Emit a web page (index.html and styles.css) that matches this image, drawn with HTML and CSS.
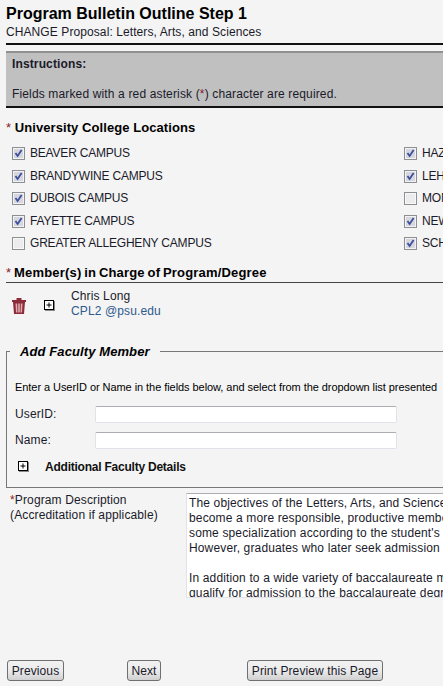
FILE: index.html
```html
<!DOCTYPE html>
<html lang="en">
<head>
<meta charset="utf-8"/>
<title>Program Bulletin Outline Step 1</title>
<link rel="stylesheet" href="styles.css">
</head>
<body>
<svg class="defs" width="0" height="0" aria-hidden="true">
  <symbol id="checked" viewBox="0 0 13 13">
    <rect x="0.5" y="0.5" width="12" height="12" fill="#e6e6ee" stroke="#8e8f8f"/>
    <rect x="1.5" y="1.5" width="10" height="10" fill="#d5d6de" stroke="#f2f2f6"/>
    <path d="M3.5 6 L5.6 9 L9.6 3" fill="none" stroke="#3d4f9c" stroke-width="1.8"/>
  </symbol>
  <symbol id="unchecked" viewBox="0 0 13 13">
    <rect x="0.5" y="0.5" width="12" height="12" fill="#e6e6e8" stroke="#8e8f8f"/>
    <rect x="1.5" y="1.5" width="10" height="10" fill="#ececee" stroke="#f8f8f8"/>
  </symbol>
  <symbol id="plus" viewBox="0 0 11 11">
    <rect x="1" y="1" width="10" height="10" fill="#888"/>
    <rect x="0.5" y="0.5" width="9" height="9" fill="#fff" stroke="#000"/>
    <path d="M2.500 5 H7.500 M5 2.500 V7.500" stroke="#000"/>
  </symbol>
</svg>

<div class="page">
  <header class="top">
    <h1>Program Bulletin Outline Step 1</h1>
    <p>CHANGE Proposal: Letters, Arts, and Sciences</p>
  </header>

  <section class="instructions">
    <strong>Instructions:</strong>
    <p>Fields marked with a red asterisk (<span class="req">*</span>) character are required.</p>
  </section>

  <h2 class="heading"><span class="req">*</span> University College Locations</h2>
  <div class="locations">
    <label class="loc"><svg class="check"><use href="#checked"/></svg>BEAVER CAMPUS</label>
    <label class="loc"><svg class="check"><use href="#checked"/></svg>HAZLETON CAMPUS</label>
    <label class="loc"><svg class="check"><use href="#checked"/></svg>BRANDYWINE CAMPUS</label>
    <label class="loc"><svg class="check"><use href="#checked"/></svg>LEHIGH VALLEY CAMPUS</label>
    <label class="loc"><svg class="check"><use href="#checked"/></svg>DUBOIS CAMPUS</label>
    <label class="loc"><svg class="check"><use href="#unchecked"/></svg>MONT ALTO CAMPUS</label>
    <label class="loc"><svg class="check"><use href="#checked"/></svg>FAYETTE CAMPUS</label>
    <label class="loc"><svg class="check"><use href="#checked"/></svg>NEW KENSINGTON CAMPUS</label>
    <label class="loc"><svg class="check"><use href="#unchecked"/></svg>GREATER ALLEGHENY CAMPUS</label>
    <label class="loc"><svg class="check"><use href="#checked"/></svg>SCHUYLKILL CAMPUS</label>
  </div>

  <h2 class="heading ruled"><span class="req">*</span> Member(s) in Charge of Program/Degree</h2>
  <div class="member">
    <svg class="trash" viewBox="0 0 16 18" aria-hidden="true">
      <path d="M1 3 H15 V5 H1 Z M5.500 3 V1 H10.500 V3" fill="#8c2b3a"/>
      <path d="M2 5 H14 L13 17 H3 Z" fill="#8c2b3a"/>
      <path d="M4.500 6.500 L5 15.500 H6.500 L6.200 6.500 Z M7.200 6.500 V15.500 H8.800 V6.500 Z M9.800 6.500 L9.500 15.500 H11 L11.500 6.500 Z" fill="#e0a9ae"/>
    </svg>
    <svg class="plus"><use href="#plus"/></svg>
    <div class="member-name">
      <div>Chris Long</div>
      <a href="#">CPL2 @psu.edu</a>
    </div>
  </div>

  <fieldset class="faculty">
    <legend>Add Faculty Member</legend>
    <p class="hint">Enter a UserID or Name in the fields below, and select from the dropdown list presented</p>
    <div class="field"><label>UserID:</label><input type="text"></div>
    <div class="field"><label>Name:</label><input type="text"></div>
    <div class="details"><svg class="plus"><use href="#plus"/></svg><strong>Additional Faculty Details</strong></div>
  </fieldset>

  <div class="description">
    <label><span class="req">*</span>Program Description<br>(Accreditation if applicable)</label>
    <textarea wrap="off" readonly>The objectives of the Letters, Arts, and Sciences program are to help the student
become a more responsible, productive member of society and to provide
some specialization according to the student's interests and abilities.
However, graduates who later seek admission to a degree program may do so.

In addition to a wide variety of baccalaureate majors, students may also
qualify for admission to the baccalaureate degree programs offered at Penn State.</textarea>
  </div>

  <div class="actions">
    <button class="btn-prev">Previous</button>
    <button class="btn-next">Next</button>
    <button class="btn-print">Print Preview this Page</button>
  </div>
</div>
</body>
</html>
```

FILE: styles.css
```css
* {
    box-sizing: border-box;
}
html, body {
    margin: 0;
    height: 686px;
    overflow: hidden;
    background-color: #f4f4f4;
}
body {
    font-family: "Liberation Sans", Arial, sans-serif;
    font-size: 12px;
    letter-spacing: 0.13px;
    color: #1a1a2a;
}
.defs {
    position: absolute;
}
.page {
    width: 800px;
    padding: 5px 0 0 6px;
}
.req {
    color: #8c1c2c;
}

/* title */
.top {
    border-bottom: 2px solid #111;
    height: 40px;
}
.top h1 {
    margin: 0;
    font-size: 16px;
    line-height: 18px;
    letter-spacing: 0;
    color: #000;
}
.top p {
    margin: 2px 0 0;
    line-height: 15px;
    letter-spacing: 0.09px;
}

/* grey box */
.instructions {
    margin-top: 6px;
    height: 57px;
    padding: 4px 6px 0;
    background-color: #c0c0c0;
    border-top: 2px solid #909090;
    border-bottom: 2px solid #111;
}
.instructions strong {
    display: block;
    line-height: 15px;
}
.instructions p {
    margin: 15px 0 0;
    line-height: 15px;
    letter-spacing: 0.145px;
}

/* sections */
.heading {
    margin: 12px 0 0;
    font-size: 13px;
    line-height: 16px;
    letter-spacing: 0.07px;
    color: #000;
}
.heading .req {
    font-weight: normal;
}
.ruled {
    margin-top: 10.1px;
    padding-bottom: 1px;
    letter-spacing: 0.18px;
    word-spacing: -1px;
    border-bottom: 1px solid #444;
}
.locations {
    display: grid;
    grid-template-columns: 392px 300px;
    grid-auto-rows: 22.5px;
    margin: 6.4px 0 0 6px;
}
.loc {
    display: flex;
    align-items: center;
    line-height: 15px;
    letter-spacing: -0.2px;
}
.check {
    flex: none;
    width: 13px;
    height: 13px;
    margin-right: 5px;
}

/* member */
.member {
    display: flex;
    align-items: flex-start;
    margin-top: 6px;
    height: 55px;
}
.trash {
    width: 16px;
    height: 18px;
    margin: 8px 0 0 5px;
}
.plus {
    flex: none;
    width: 11px;
    height: 11px;
}
.member > .plus {
    margin: 11px 0 0 17px;
}
.member-name {
    margin-left: 16px;
    line-height: 15px;
}
.member-name a {
    color: #2f5a8c;
    text-decoration: none;
}

/* fieldset */
.faculty {
    margin: 0;
    padding: 0 0 0 3px;
    height: 144px;
    border: 1px solid #777;
}
.faculty legend {
    padding: 0 10px;
    font-size: 13px;
    font-weight: bold;
    font-style: italic;
    line-height: 16px;
    letter-spacing: 0.1px;
    color: #000;
}
.hint {
    margin: 20px 0 0 5px;
    font-size: 11px;
    line-height: 14px;
    letter-spacing: -0.06px;
    color: #000;
}
.field {
    display: flex;
    align-items: center;
    margin-top: 10px;
    height: 21px;
    margin-left: 5px;
}
.field + .field {
    margin-top: 5px;
}
.field label {
    width: 80px;
}
.field input {
    width: 302px;
    height: 17px;
    padding: 0 2px;
    background-color: #fff;
    border: 1px solid #e2e3ea;
    border-top: 1px solid #abadb3;
    border-radius: 2px;
}
.details {
    display: flex;
    align-items: center;
    margin: 9px 0 0 8px;
}
.details strong {
    margin-left: 16px;
    letter-spacing: -0.23px;
    color: #111;
}

/* description */
.description {
    display: flex;
    margin-top: 5px;
}
.description label {
    width: 180px;
    padding: 0 0 0 4px;
    line-height: 15px;
}
.description textarea {
    width: 500px;
    height: 105px;
    padding: 2px;
    font-family: inherit;
    font-size: 12px;
    line-height: 15px;
    letter-spacing: 0.14px;
    color: #1a1a2a;
    background-color: #fff;
    border: 1px solid #e2e3ea;
    border-top: 1px solid #abadb3;
    outline: none;
    resize: none;
    overflow: hidden;
}

/* buttons */
.actions {
    display: flex;
    margin: 62px 0 0 1px;
}
.actions button {
    height: 21px;
    padding: 1px 0 0;
    font-family: inherit;
    font-size: 12px;
    letter-spacing: 0.1px;
    color: #1a1a2a;
    background: linear-gradient(#f2f2f2 0%, #ebebeb 50%, #d0d0d0 100%);
    border: 1px solid #707070;
    border-radius: 3px;
}
.btn-prev {
    width: 57px;
}
.btn-next {
    width: 34px;
    margin-left: 63px;
}
.btn-print {
    width: 136px;
    margin-left: 86px;
}
```
